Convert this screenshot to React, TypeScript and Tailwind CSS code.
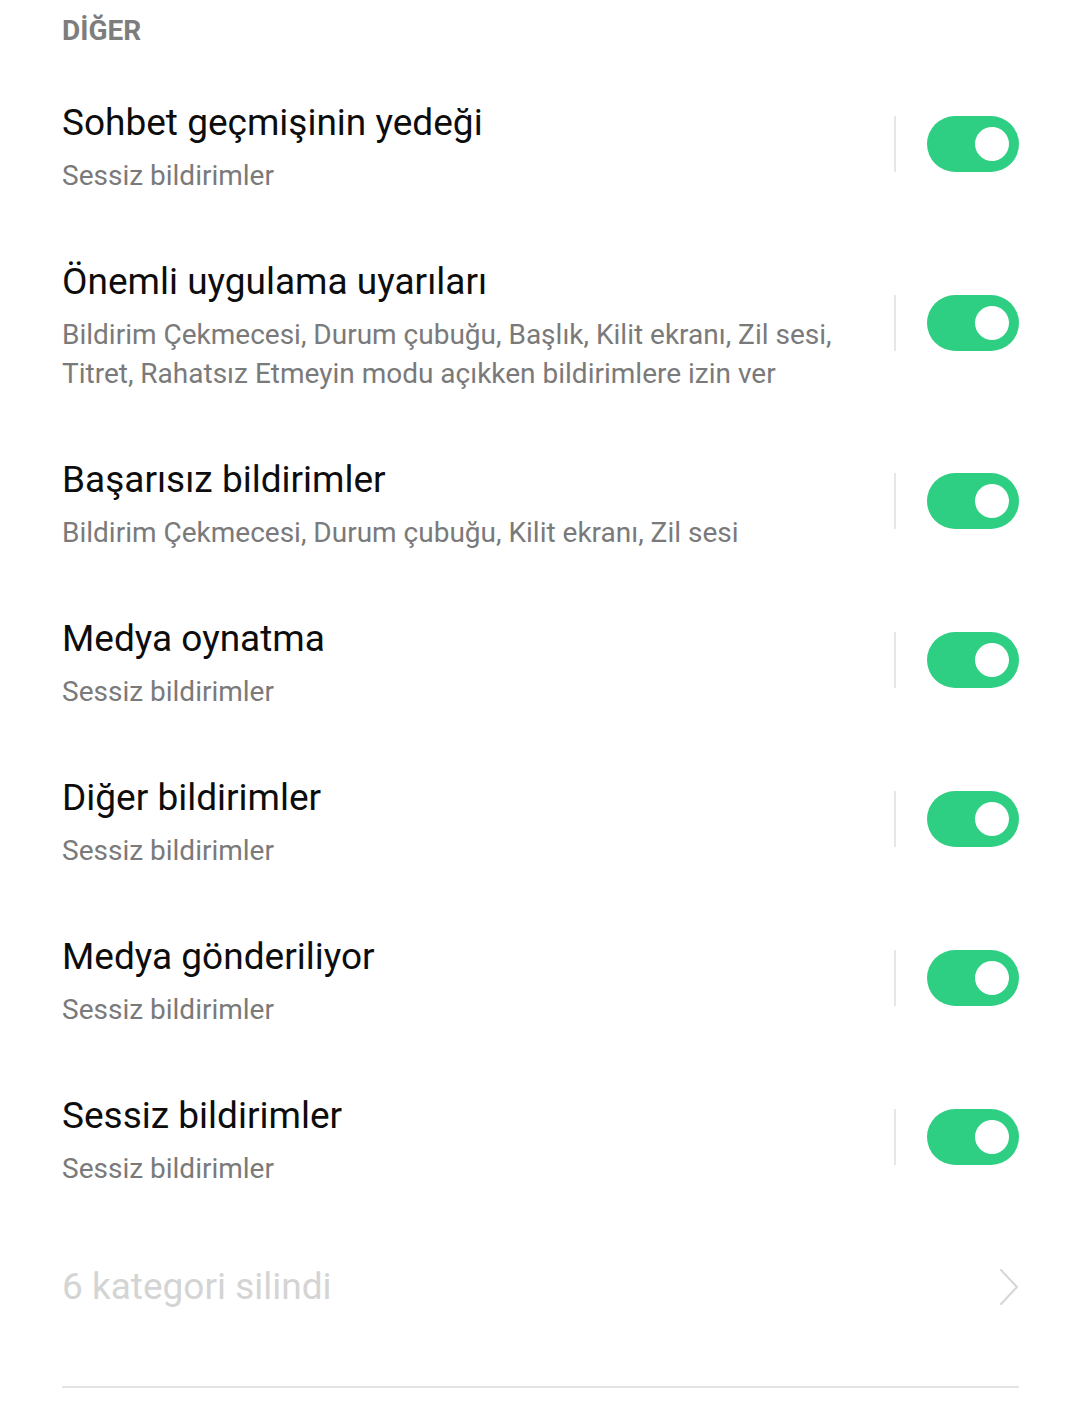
import React from "react";

type Item = { title: string; subtitle: string };

const items: Item[] = [
  { title: "Sohbet geçmişinin yedeği", subtitle: "Sessiz bildirimler" },
  {
    title: "Önemli uygulama uyarıları",
    subtitle:
      "Bildirim Çekmecesi, Durum çubuğu, Başlık, Kilit ekranı, Zil sesi, Titret, Rahatsız Etmeyin modu açıkken bildirimlere izin ver",
  },
  {
    title: "Başarısız bildirimler",
    subtitle: "Bildirim Çekmecesi, Durum çubuğu, Kilit ekranı, Zil sesi",
  },
  { title: "Medya oynatma", subtitle: "Sessiz bildirimler" },
  { title: "Diğer bildirimler", subtitle: "Sessiz bildirimler" },
  { title: "Medya gönderiliyor", subtitle: "Sessiz bildirimler" },
  { title: "Sessiz bildirimler", subtitle: "Sessiz bildirimler" },
];

const Toggle: React.FC = () => (
  <div className="w-[92px] h-[56px] rounded-full bg-[#2ecf82] flex items-center justify-end pr-[10px]">
    <div className="w-[34px] h-[34px] rounded-full bg-white" />
  </div>
);

const Row: React.FC<{ item: Item }> = ({ item }) => (
  <div className="flex items-center pt-[32px] pb-[31px]">
    <div className="flex-1 min-w-0 pr-[50px]">
      <div className="text-[37px] leading-[48px] text-[#0d0d0d]">{item.title}</div>
      <div className="mt-[9px] text-[28px] leading-[39px] text-[#7a7a7a]">{item.subtitle}</div>
    </div>
    <div className="flex items-center mb-[6px]">
      <div className="w-[2px] h-[56px] bg-[#e6e6e6]" />
      <div className="ml-[31px]">
        <Toggle />
      </div>
    </div>
  </div>
);

export default function App() {
  return (
    <div
      className="min-h-screen bg-white px-[62px] pr-[61px]"
      style={{ fontFamily: "Roboto, 'Noto Sans', sans-serif" }}
    >
      {/* Section header */}
      <div className="pt-[11px] pb-[16px] text-[28px] leading-[40px] font-bold text-[#7d7d7d]">
        DİĞER
      </div>

      {items.map((item) => (
        <Row key={item.title} item={item} />
      ))}

      {/* Deleted categories link */}
      <div className="flex items-center justify-between pt-[44px] pb-[75px]">
        <span className="text-[37px] leading-[48px] text-[#d4d4d4]">6 kategori silindi</span>
        <svg width="20" height="38" viewBox="0 0 20 38" fill="none">
          <path d="M2 2 L18 19 L2 36" stroke="#d6d6d6" strokeWidth="2" strokeLinecap="round" strokeLinejoin="round" />
        </svg>
      </div>
      <div className="h-[2px] bg-[#e4e4e4]" />
    </div>
  );
}
